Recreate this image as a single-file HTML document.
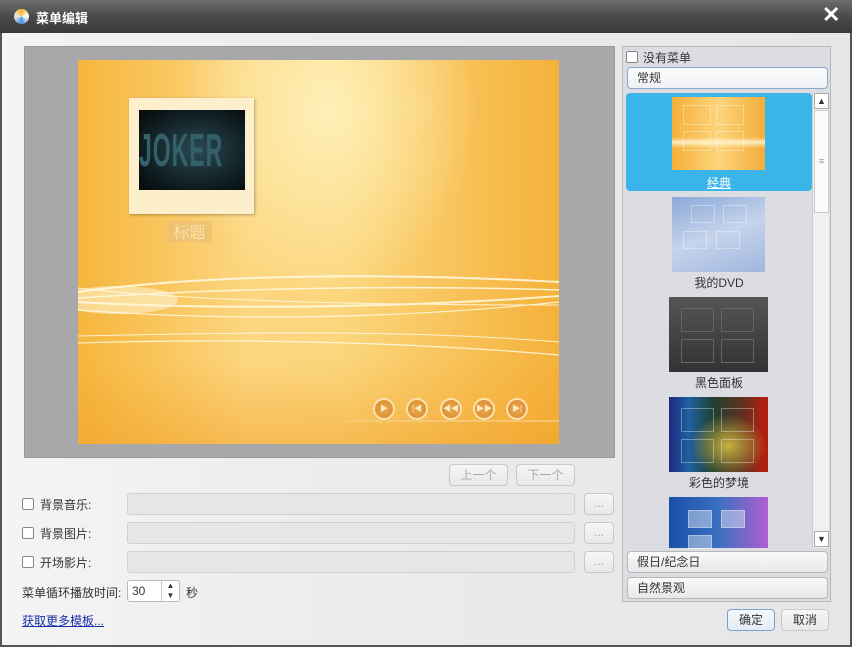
<!DOCTYPE html>
<html><head><meta charset="utf-8"><style>
*{margin:0;padding:0;box-sizing:border-box}
body{width:852px;height:647px;overflow:hidden;font-family:"Liberation Sans","Noto Sans CJK SC",sans-serif;font-size:12px;color:#333;position:relative;background:#ececec}
.a{position:absolute}
.title{left:0;top:0;width:852px;height:33px;background:linear-gradient(#6e6e6e,#4a4a4a 50%,#3a3a3a);color:#fff;font-size:13px}
.body{left:0;top:33px;width:852px;height:614px;background:linear-gradient(90deg,#f4f4f6 0,#ececec 40%,#e6e6e6);border-left:2px solid #555;border-right:2px solid #555;border-bottom:2px solid #555}
.cb{width:12px;height:12px;border:1px solid #888;background:#fff;border-radius:2px}
.inp{background:#e6e6e6;border:1px solid #d0d0d0;border-radius:3px}
.btn{border:1px solid #c8c8c8;border-radius:4px;background:linear-gradient(#f6f6f6,#e8e8e8);color:#aaa;text-align:center;line-height:20px}
.cat{left:627px;width:201px;height:22px;border:1px solid #b8b8b8;border-radius:4px;background:linear-gradient(#fafafa,#e8e8e8);line-height:20px;padding-left:9px;color:#333}
.g{position:absolute;border:1px solid rgba(255,255,255,.35)}
.lab{width:186px;text-align:center;left:626px;color:#333}
.pb{width:22px;height:22px;border-radius:50%;border:2px solid #fde2b0;background:radial-gradient(#eaa850,#d88a2a);top:398px;color:#fde8c0;font-size:8px;text-align:center;line-height:18px}
</style></head><body>
<div class="a title">
 <div class="a" style="left:14px;top:9px;width:15px;height:15px;border-radius:50%;background:conic-gradient(#f7b733,#fff 25%,#4a90d9 50%,#e8e8e8 75%,#f7b733)"></div>
 <div class="a" style="left:36px;top:8px;font-weight:bold">菜单编辑</div>
 <div class="a" style="left:822px;top:2px;font-size:22px;font-weight:bold">✕</div>
</div>
<div class="a body"></div>
<div class="a" style="left:24px;top:46px;width:591px;height:412px;background:#a8a8aa;border:1px solid #999"></div>
<div class="a" style="left:78px;top:60px;width:481px;height:384px;background:radial-gradient(ellipse 150px 190px at 250px 50px,#fff0b8,rgba(255,240,190,0) 100%),linear-gradient(90deg,#f6b63c,#fcd680 35%,#fbd67c 55%,#f5b13a);overflow:hidden">
 <svg class="a" style="left:0;top:0" width="481" height="384" fill="none" stroke-linecap="round">
  <g stroke="#fffbe6" opacity=".85">
   <path d="M0 232 C120 215 300 212 481 222" stroke-width="2"/>
   <path d="M0 238 C150 228 330 225 481 230" stroke-width="1.5"/>
   <path d="M0 242 C140 250 320 248 481 236" stroke-width="2"/>
   <path d="M0 250 C160 262 330 258 481 242" stroke-width="1.2"/>
   <path d="M0 228 C100 240 260 245 481 245" stroke-width="1"/>
   <path d="M0 283 C160 278 330 282 481 295" stroke-width="1.2"/>
   <path d="M0 276 C180 272 340 270 481 282" stroke-width="1"/>
  </g>
  <ellipse cx="40" cy="240" rx="60" ry="14" fill="#fffbe6" opacity=".5"/>
  <path d="M270 361 L481 361" stroke="#fde8b0" stroke-width="1.5"/>
 </svg>
 <div class="a" style="left:0;top:300px;width:481px;height:84px;background:linear-gradient(rgba(245,170,50,0),rgba(240,160,40,.5))"></div>
</div>
<div class="a" style="left:129px;top:98px;width:125px;height:116px;background:#fdefcc;box-shadow:1px 1px 3px rgba(0,0,0,.3)">
 <div class="a" style="left:10px;top:12px;width:106px;height:80px;background:radial-gradient(ellipse at 55% 50%,#2a4a52,#0e1a1e 70%,#050808);overflow:hidden">
  <div style="color:#34606a;font-size:46px;font-weight:bold;line-height:80px;transform:scaleX(.5);transform-origin:0 0;width:220px;letter-spacing:2px">JOKER</div>
 </div>
</div>
<div class="a" style="left:167px;top:221px;width:45px;height:21px;background:rgba(230,190,120,.6);color:#fbe6b8;font-size:16px;text-align:center;line-height:21px;font-family:'Noto Serif CJK SC',serif">标题</div>
<div class="a pb" style="left:373px">▶</div>
<div class="a pb" style="left:406px">|◀</div>
<div class="a pb" style="left:440px">◀◀</div>
<div class="a pb" style="left:473px">▶▶</div>
<div class="a pb" style="left:506px">▶|</div>
<div class="a btn" style="left:449px;top:464px;width:59px;height:22px">上一个</div>
<div class="a btn" style="left:516px;top:464px;width:59px;height:22px">下一个</div>
<div class="a cb" style="left:22px;top:498px"></div><div class="a" style="left:40px;top:496px">背景音乐:</div>
<div class="a inp" style="left:127px;top:493px;width:448px;height:22px"></div><div class="a btn" style="left:584px;top:493px;width:30px;height:22px;line-height:18px">...</div>
<div class="a cb" style="left:22px;top:527px"></div><div class="a" style="left:40px;top:525px">背景图片:</div>
<div class="a inp" style="left:127px;top:522px;width:448px;height:22px"></div><div class="a btn" style="left:584px;top:522px;width:30px;height:22px;line-height:18px">...</div>
<div class="a cb" style="left:22px;top:556px"></div><div class="a" style="left:40px;top:554px">开场影片:</div>
<div class="a inp" style="left:127px;top:551px;width:448px;height:22px"></div><div class="a btn" style="left:584px;top:551px;width:30px;height:22px;line-height:18px">...</div>
<div class="a" style="left:22px;top:584px">菜单循环播放时间:</div>
<div class="a" style="left:127px;top:580px;width:53px;height:22px;background:#fff;border:1px solid #bbb;border-radius:3px;padding:3px 0 0 4px">30</div>
<div class="a" style="left:161px;top:581px;width:18px;height:20px;border-left:1px solid #ccc;font-size:8px;text-align:center;line-height:10px;color:#333">▲<br>▼</div>
<div class="a" style="left:186px;top:584px">秒</div>
<div class="a" style="left:22px;top:612px;color:#1a2fa8;text-decoration:underline">获取更多模板...</div>
<div class="a" style="left:622px;top:46px;width:209px;height:556px;background:#dcdde2;border:1px solid #b8b8b8"></div>
<div class="a cb" style="left:626px;top:51px"></div><div class="a" style="left:643px;top:49px">没有菜单</div>
<div class="a cat" style="top:67px;border-color:#8aa8cc;background:linear-gradient(#fdfdfd,#eef0f4)">常规</div>
<div class="a" style="left:626px;top:93px;width:186px;height:98px;background:#3bb4ea;border-radius:4px"></div>
<div class="a" style="left:812px;top:93px;width:17px;height:455px;background:#f0f0f0;border-left:1px solid #ccc">
 <div class="a" style="left:1px;top:0;width:15px;height:16px;background:#fff;border:1px solid #aaa;font-size:9px;text-align:center;line-height:14px">▲</div>
 <div class="a" style="left:1px;top:17px;width:15px;height:103px;background:#fafafa;border:1px solid #ccc;color:#999;font-size:9px;text-align:center;line-height:100px">≡</div>
 <div class="a" style="left:1px;top:438px;width:15px;height:16px;background:#fff;border:1px solid #aaa;font-size:9px;text-align:center;line-height:14px">▼</div>
</div>
<div class="a" style="left:672px;top:97px;width:93px;height:73px;background:linear-gradient(rgba(255,255,255,0) 55%,rgba(255,250,220,.8) 62%,rgba(255,255,255,0) 70%),linear-gradient(90deg,#f6b03a,#fcd47a 50%,#f4ae3a)">
 <i class="g" style="left:11px;top:8px;width:28px;height:20px"></i><i class="g" style="left:44px;top:8px;width:28px;height:20px"></i><i class="g" style="left:11px;top:34px;width:28px;height:20px"></i><i class="g" style="left:44px;top:34px;width:28px;height:20px"></i></div>
<div class="a lab" style="top:174px;color:#fff;text-decoration:underline">经典</div>
<div class="a" style="left:672px;top:197px;width:93px;height:75px;background:linear-gradient(160deg,#8aa8d8,#c6d4ec 50%,#9fb6de)">
 <i class="g" style="left:19px;top:8px;width:24px;height:18px"></i><i class="g" style="left:51px;top:8px;width:24px;height:18px"></i><i class="g" style="left:11px;top:34px;width:24px;height:18px"></i><i class="g" style="left:44px;top:34px;width:24px;height:18px"></i></div>
<div class="a lab" style="top:274px">我的DVD</div>
<div class="a" style="left:669px;top:297px;width:99px;height:75px;background:linear-gradient(#555,#333)">
 <i class="g" style="left:12px;top:11px;width:33px;height:24px;border-color:#666"></i><i class="g" style="left:52px;top:11px;width:33px;height:24px;border-color:#666"></i><i class="g" style="left:12px;top:42px;width:33px;height:24px;border-color:#666"></i><i class="g" style="left:52px;top:42px;width:33px;height:24px;border-color:#666"></i></div>
<div class="a lab" style="top:374px">黑色面板</div>
<div class="a" style="left:669px;top:397px;width:99px;height:75px;background:radial-gradient(ellipse at 60% 65%,#c8b040,rgba(0,0,0,0) 45%),linear-gradient(90deg,#1a2a80,#2060a0 20%,#204030 45%,#603020 75%,#b02010 95%)">
 <i class="g" style="left:12px;top:11px;width:33px;height:24px"></i><i class="g" style="left:52px;top:11px;width:33px;height:24px"></i><i class="g" style="left:12px;top:42px;width:33px;height:24px"></i><i class="g" style="left:52px;top:42px;width:33px;height:24px"></i></div>
<div class="a lab" style="top:474px">彩色的梦境</div>
<div class="a" style="left:669px;top:497px;width:99px;height:51px;background:linear-gradient(90deg,#1a50a8,#3a70c0 50%,#b060d0)">
 <i class="g" style="left:19px;top:13px;width:24px;height:18px;background:rgba(255,255,255,.4)"></i><i class="g" style="left:52px;top:13px;width:24px;height:18px;background:rgba(255,255,255,.4)"></i><i class="g" style="left:19px;top:38px;width:24px;height:14px;background:rgba(255,255,255,.4)"></i></div>
<div class="a cat" style="top:551px">假日/纪念日</div>
<div class="a cat" style="top:577px">自然景观</div>
<div class="a btn" style="left:727px;top:609px;width:48px;height:22px;color:#333;border-color:#7aa2d0;background:linear-gradient(#f4f8fc,#e4ecf4)">确定</div>
<div class="a btn" style="left:781px;top:609px;width:48px;height:22px;color:#333">取消</div>
</body></html>
